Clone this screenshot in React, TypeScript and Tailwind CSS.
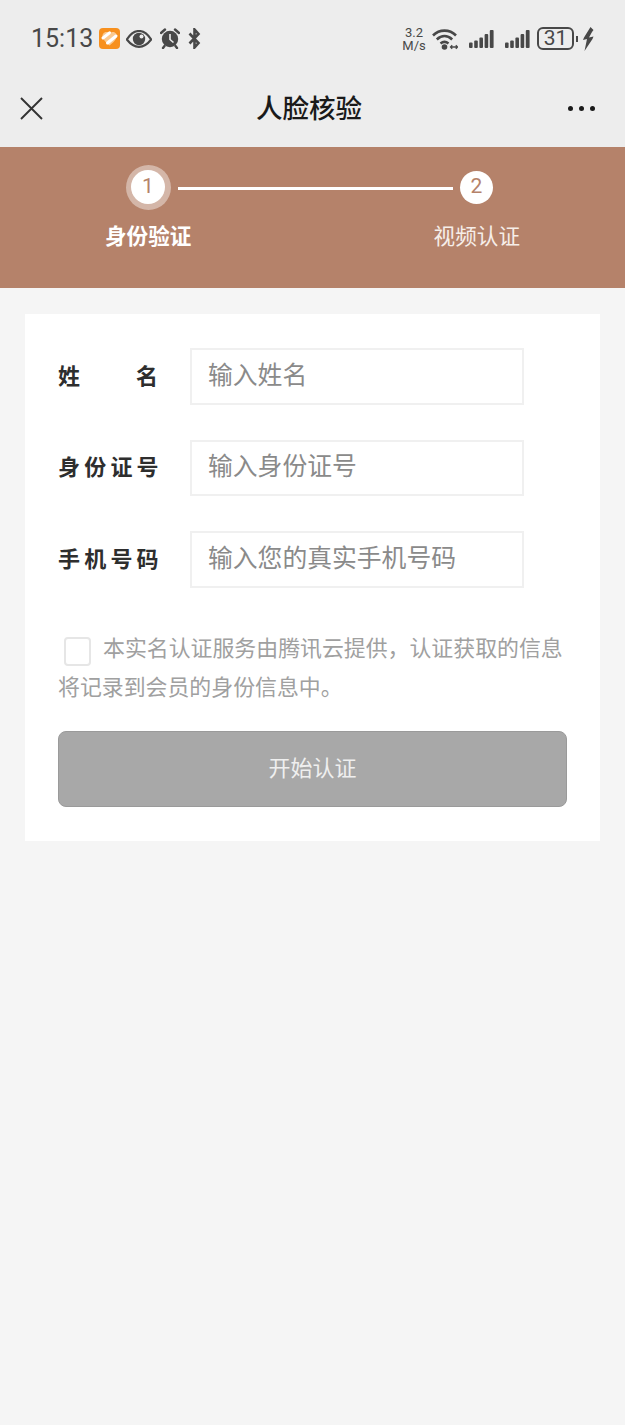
import React from "react";

const cjk = { fontFamily: '"Noto Sans CJK SC", "Noto Sans", sans-serif' };

const SignalIcon = () => (
  <svg width="25" height="18" viewBox="0 0 25 18" fill="#484848">
    <rect x="0" y="12.5" width="3.6" height="5.5" rx="1" />
    <rect x="5.2" y="10.5" width="3.6" height="7.5" rx="1" />
    <rect x="10.4" y="7.5" width="3.6" height="10.5" rx="1" />
    <rect x="15.6" y="4" width="3.6" height="14" rx="1" />
    <rect x="20.8" y="0" width="3.8" height="18" rx="1" />
  </svg>
);

const StatusBar = () => (
  <div className="h-[72px] pl-[31px] pr-[31px] flex items-center justify-between pt-[5px]">
    <div className="flex items-center">
      <span className="text-[25px] text-[#484848] w-[68px] pt-[1px] font-['Roboto',sans-serif]">15:13</span>
      <svg width="21" height="21" viewBox="0 0 21 21" className="mr-[6px]">
        <rect width="21" height="21" rx="4" fill="#f7901e" />
        <path d="M3.5 9 C3 5.5 6 3 9.5 4.5 L10.5 5.5 L12 4.5 C15.5 3 18.5 5.5 17.5 9.5 C16.5 12.5 13 15.5 10.5 17.5 C8 15.5 4.5 12.5 3.5 9 Z" fill="#fbc98f" />
        <path d="M4 10 L10.5 4.8 M8.5 15 L17 8" stroke="#fff" strokeWidth="3" strokeLinecap="round" />
      </svg>
      <svg width="26" height="18" viewBox="0 0 26 18" className="mr-2">
        <path d="M0.8 9.5 C5 3 9 1 13 1 C17 1 21 3 25.2 9.5 C21 15 17 16.8 13 16.8 C9 16.8 5 15 0.8 9.5 Z" fill="none" stroke="#484848" strokeWidth="2.2" />
        <circle cx="13" cy="9" r="6.2" fill="#484848" />
        <circle cx="15.5" cy="6.5" r="2" fill="#ededed" />
      </svg>
      <svg width="20" height="21" viewBox="0 0 20 21" className="mr-2">
        <circle cx="10" cy="11" r="8.2" fill="#484848" />
        <path d="M10 6 V11.5 L13.5 14.5" fill="none" stroke="#ededed" strokeWidth="1.6" />
        <path d="M1 5 L5 1.5 M19 5 L15 1.5 M4.5 18 L3 20 M15.5 18 L17 20" stroke="#484848" strokeWidth="2.4" strokeLinecap="round" />
      </svg>
      <svg width="13" height="21" viewBox="0 0 13 21">
        <path d="M1.5 5.5 L10.5 15 L6.5 19.5 V1.5 L10.5 6 L1.5 15.5" fill="none" stroke="#484848" strokeWidth="2.6" />
      </svg>
    </div>
    <div className="flex items-center">
      <div className="w-[24px] mr-[6px] text-[13px] leading-[13px] text-[#484848] text-center font-['Roboto',sans-serif]">
        <div>3.2</div>
        <div>M/s</div>
      </div>
      <svg width="26" height="22" viewBox="0 0 26 22" className="mr-[11px]">
        <path d="M1 7.5 C7.5 1 17.5 1 24 7.5 M4.8 11.5 C9.5 7 15.5 7 20.2 11.5 M8.5 15.5 C11 13.5 14 13.5 16.5 15.5" fill="none" stroke="#484848" strokeWidth="2.6" />
        <circle cx="12.5" cy="19" r="2.8" fill="#484848" />
        <path d="M18.5 19 H25.5 M20.2 17.2 L18.5 19 L20.2 20.8 M23.8 17.2 L25.5 19 L23.8 20.8" fill="none" stroke="#484848" strokeWidth="1.3" />
      </svg>
      <div className="mr-[11px]"><SignalIcon /></div>
      <div className="mr-[7px]"><SignalIcon /></div>
      <div className="w-[37px] h-[23px] border-2 border-[#484848] rounded-[6px] flex items-center justify-center text-[21px] leading-none text-[#484848] font-['Roboto',sans-serif]">
        31
      </div>
      <div className="w-[2px] h-[6px] ml-[2px] mr-[4px] bg-[#484848]" />
      <svg width="12" height="24" viewBox="0 0 12 24">
        <path d="M8.5 0 L2 10.5 L1 13 L5 12 L2.5 24 L10.5 12 L11.5 9.5 L7 10.5 L10 5 L11.5 3 Z" fill="#484848" />
      </svg>
    </div>
  </div>
);

const NavBar = () => (
  <div className="h-[75px] pl-5 pr-[29px] flex items-center justify-between pb-[2px]">
    <svg width="23" height="23" viewBox="0 0 23 23">
      <path d="M1 1 L22 22 M22 1 L1 22" stroke="#333" strokeWidth="1.9" />
    </svg>
    <span className="text-[26.5px] font-medium text-[#1a1a1a] pl-[7px] pb-[4px]">人脸核验</span>
    <div className="flex gap-[6px] mr-[1px]">
      <span className="w-[5px] h-[5px] rounded-full bg-[#1a1a1a]" />
      <span className="w-[5px] h-[5px] rounded-full bg-[#1a1a1a]" />
      <span className="w-[5px] h-[5px] rounded-full bg-[#1a1a1a]" />
    </div>
  </div>
);

const Steps = () => (
  <div className="h-[141px] bg-[#b5826a] pl-[105px] pr-[105px] pt-[17px]">
    <div className="flex items-center h-[46px]">
      <div className="w-[86px] flex justify-center">
        <div className="w-[45px] h-[45px] rounded-full bg-[#d4b6a8] flex items-center justify-center">
          <div className="w-[34px] h-[34px] rounded-full bg-white flex items-center justify-center text-[21px] text-[#b5826a] font-['Roboto',sans-serif]">
            1
          </div>
        </div>
      </div>
      <div className="h-[3px] w-[275px] ml-[-13px] mt-[2px] bg-white" />
      <div className="w-[33px] h-[33px] ml-[7px] rounded-full bg-white flex items-center justify-center text-[21px] text-[#b5826a] font-['Roboto',sans-serif]">
        2
      </div>
    </div>
    <div className="flex justify-between mt-[9px] text-[21.6px] leading-[32px] text-white">
      <span className="font-bold">身份验证</span>
      <span className="text-[#f6eee9]">视频认证</span>
    </div>
  </div>
);

const Field = ({ label, placeholder, spread }: { label: string; placeholder: string; spread?: boolean }) => (
  <div className="flex items-center">
    <div
      className={
        spread
          ? "w-[100px] mr-[32px] pb-[4px] flex justify-between text-[22px] font-bold text-[#2e2e2e]"
          : "w-[100px] mr-[32px] pb-[4px] text-[22px] font-bold text-[#2e2e2e] tracking-[4.2px] whitespace-nowrap"
      }
    >
      {spread ? label.split("").map((c) => <span key={c}>{c}</span>) : label}
    </div>
    <div className="w-[334px] h-[56.5px] border-2 border-[#f0f0f0] pl-4 pb-[6px] flex items-center text-[24.8px] text-[#8a8a8a]">
      {placeholder}
    </div>
  </div>
);

export default function App() {
  return (
    <div className="w-[625px] h-[1425px] bg-[#f5f5f5] overflow-hidden" style={cjk}>
      <div className="bg-[#ededed]">
        <StatusBar />
        <NavBar />
      </div>
      <Steps />
      <div className="mx-[25px] mt-[26px] h-[527px] bg-white pl-[33px] pr-[33px] pt-[34px]">
        <div className="flex flex-col gap-[35px]">
          <Field label="姓名" placeholder="输入姓名" spread />
          <Field label="身份证号" placeholder="输入身份证号" />
          <Field label="手机号码" placeholder="输入您的真实手机号码" />
        </div>
        <div className="mt-[39px] text-[21.9px] leading-[39px] text-[#a0a0a0]">
          <span className="inline-block align-[-10px] w-[27px] h-[29px] ml-[6px] mr-[12px] border-2 border-[#e6e6e6] rounded-[4px] bg-white" />
          本实名认证服务由腾讯云提供，认证获取的信息将记录到会员的身份信息中。
        </div>
        <div className="mt-[26px] h-[76px] rounded-[8px] bg-[#a8a8a8] border border-[#9a9a9a] pb-[5px] flex items-center justify-center text-[22px] text-[#efefef]">
          开始认证
        </div>
      </div>
    </div>
  );
}
